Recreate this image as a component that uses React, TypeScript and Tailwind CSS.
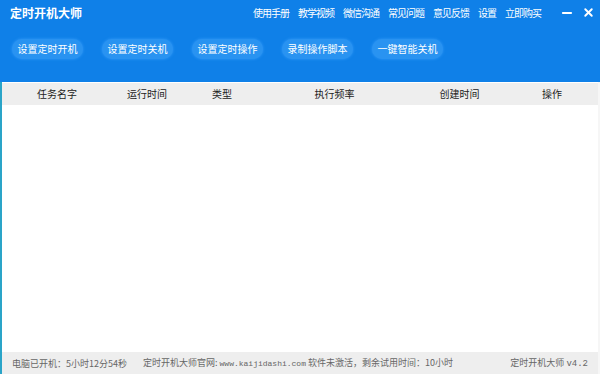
import { Minus, X } from "lucide-react";

const MENU = ["使用手册", "教学视频", "微信沟通", "常见问题", "意见反馈", "设置", "立即购买"];

const ACTIONS = ["设置定时开机", "设置定时关机", "设置定时操作", "录制操作脚本", "一键智能关机"];

const COLUMNS = [
  { label: "任务名字", w: "w-[110px]" },
  { label: "运行时间", w: "w-[70px]" },
  { label: "类型", w: "w-[80px]" },
  { label: "执行频率", w: "w-[145px]" },
  { label: "创建时间", w: "w-[105px]" },
  { label: "操作", w: "w-[80px]" },
];

export default function App() {
  return (
    <div
      className="w-[600px] h-[374px] flex flex-col bg-white overflow-hidden"
      style={{ fontFamily: '"Noto Sans CJK SC", "Noto Sans", sans-serif' }}
    >
      <header className="h-[82px] bg-[#0f80e8] flex flex-col shrink-0">
        <div className="h-[25px] flex items-center pl-[10px] pr-[5px]">
          <h1 className="text-[12px] font-bold text-white leading-none">定时开机大师</h1>
          <nav className="ml-auto flex items-center gap-[9px] text-[10px] tracking-[-1px] text-white leading-none whitespace-nowrap">
            {MENU.map((m) => (
              <span key={m}>{m}</span>
            ))}
          </nav>
          <div className="ml-[19px] flex items-center gap-[8px] text-white">
            <Minus size={14} strokeWidth={3.5} />
            <X size={13} strokeWidth={3.5} />
          </div>
        </div>
        <div className="flex items-center gap-[19px] pl-[12px] mt-[14px]">
          {ACTIONS.map((a) => (
            <button
              key={a}
              type="button"
              className="h-[20px] w-[71px] rounded-full bg-[#2993f1] text-white text-[10px] leading-none shadow-[0_0_3px_rgba(60,160,255,0.8)]"
            >
              {a}
            </button>
          ))}
        </div>
      </header>

      <main className="flex-1 flex flex-col border-l-2 border-l-[#2aa4c8] border-r-2 border-r-[#f6f6f6]">
        <div className="h-[22px] bg-[#eeeeee] flex items-center text-[10px] text-[#222] leading-none mt-[1px]">
          {COLUMNS.map((c) => (
            <div key={c.label} className={`${c.w} text-center`}>
              {c.label}
            </div>
          ))}
        </div>
        <div className="flex-1 bg-white" />
        <footer className="h-[22px] bg-[#eeeeee] flex items-center pl-[10px] pr-[10px] text-[9px] text-[#666] leading-none whitespace-nowrap">
          <span>电脑已开机：5小时12分54秒</span>
          <span className="ml-[16px]">
            定时开机大师官网:{" "}
            <span style={{ fontFamily: '"Liberation Mono", monospace' }} className="text-[8px]">
              www.kaijidashi.com
            </span>{" "}
            软件未激活，剩余试用时间：10小时
          </span>
          <span className="ml-auto">
            定时开机大师 <span style={{ fontFamily: '"Liberation Mono", monospace' }}>v4.2</span>
          </span>
        </footer>
      </main>
    </div>
  );
}
